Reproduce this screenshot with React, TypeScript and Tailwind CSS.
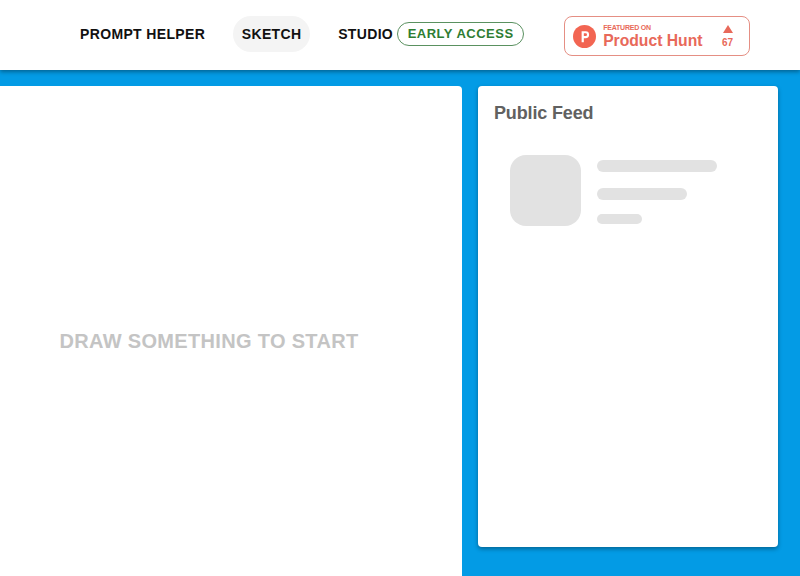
const font = "font-['Liberation_Sans',Arial,sans-serif]";

function ProductHuntBadge() {
  return (
    <a className="mt-[2px] ml-10 flex h-10 w-[186px] items-center rounded-lg border border-[#e58f84] bg-white pl-2 pr-4">
      <svg width="23" height="23" viewBox="0 0 24 24" className="shrink-0">
        <circle cx="12" cy="12" r="12" fill="#f26552" />
        <path d="M9 6.5h4.2a3.6 3.6 0 0 1 0 7.2h-1.9V18H9V6.5zm2.3 2.2v2.8h1.9a1.4 1.4 0 0 0 0-2.8h-1.9z" fill="#fff" />
      </svg>
      <div className="ml-[7px] flex flex-col text-[#e8695a]">
        <span className="text-[7px] leading-[8px] font-bold tracking-[-0.2px]">FEATURED ON</span>
        <span className="text-[15.7px] leading-[17px] font-bold">Product Hunt</span>
      </div>
      <div className="ml-auto flex flex-col items-center text-[#e8695a]">
        <svg width="10" height="8" viewBox="0 0 10 8">
          <path d="M5 0l5 8H0z" fill="#e8695a" />
        </svg>
        <span className="mt-[5px] text-[10px] leading-[10px] font-bold">67</span>
      </div>
    </a>
  );
}

function Header() {
  return (
    <header className="relative z-10 flex h-[70px] items-center bg-white pl-[72px] shadow-[0_2px_4px_rgba(0,0,0,0.35)]">
      <nav className="mb-[2px] flex items-center text-sm font-bold tracking-[0.35px] text-[#111]">
        <a className="flex h-9 items-center px-2">PROMPT HELPER</a>
        <a className="ml-5 flex h-9 w-[77px] items-center justify-center rounded-[18px] bg-[#f4f4f4]">SKETCH</a>
        <a className="ml-5 flex h-9 items-center pl-2 pr-1">STUDIO</a>
        <span className="flex h-6 w-[127px] items-center justify-center rounded-xl border border-[#5a9160] text-[13px] tracking-[0.5px] text-[#2e7d32]">
          EARLY ACCESS
        </span>
      </nav>
      <ProductHuntBadge />
    </header>
  );
}

function FeedSkeleton() {
  return (
    <div className="mt-[31px] flex pl-4">
      <div className="h-[71px] w-[71px] rounded-2xl bg-[#e2e2e2]" />
      <div className="ml-4 pt-[5px]">
        <div className="h-3 w-[120px] rounded-md bg-[#e2e2e2]" />
        <div className="mt-4 h-3 w-[90px] rounded-md bg-[#e2e2e2]" />
        <div className="mt-[14px] h-2.5 w-[45px] rounded-[5px] bg-[#e2e2e2]" />
      </div>
    </div>
  );
}

export default function App() {
  return (
    <div className={`${font} flex h-[576px] w-[800px] flex-col overflow-hidden bg-[#039be5]`}>
      <Header />
      <main className="flex flex-1 pt-4">
        <section className="flex h-full w-[462px] items-center justify-center rounded-tr bg-white pt-5 pr-11">
          <span className="text-xl font-bold tracking-[0.33px] text-[#c4c4c4]">DRAW SOMETHING TO START</span>
        </section>
        <aside className="ml-4 h-[461px] w-[300px] rounded bg-white p-4 shadow-[0_2px_4px_rgba(0,0,0,0.35)]">
          <h2 className="text-lg leading-[22px] font-bold tracking-[-0.15px] text-[#616161]">Public Feed</h2>
          <FeedSkeleton />
        </aside>
      </main>
    </div>
  );
}
